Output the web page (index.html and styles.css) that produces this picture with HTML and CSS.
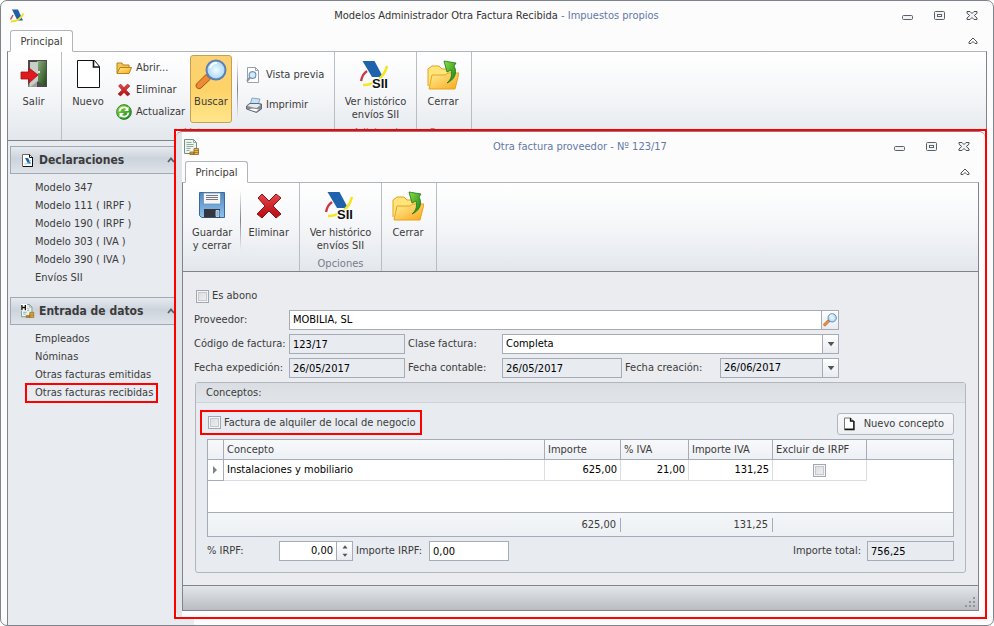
FILE: index.html
```html
<!DOCTYPE html>
<html lang="es">
<head>
<meta charset="utf-8">
<title>Modelos Administrador Otra Factura Recibida</title>
<link rel="stylesheet" href="styles.css">
</head>
<body>
<svg class="defs" aria-hidden="true">
  <defs>
    <linearGradient id="gGreen" x1="0" y1="0" x2="1" y2="1"><stop offset="0" stop-color="#8fe03c"/><stop offset="1" stop-color="#12801c"/></linearGradient>
    <linearGradient id="gRed" x1="0" y1="0" x2="0" y2="1"><stop offset="0" stop-color="#e2484a"/><stop offset="1" stop-color="#b30c10"/></linearGradient>
    <linearGradient id="gFolder" x1="0" y1="0" x2="1" y2="1"><stop offset="0" stop-color="#ffef9a"/><stop offset="1" stop-color="#f9a81a"/></linearGradient>
    <linearGradient id="gDoor" x1="0" y1="0" x2="1" y2="1"><stop offset="0" stop-color="#8fae84"/><stop offset="1" stop-color="#1e4a12"/></linearGradient>
    <linearGradient id="gBlue" x1="0" y1="0" x2="0" y2="1"><stop offset="0" stop-color="#4f86bd"/><stop offset="1" stop-color="#8ec3ee"/></linearGradient>
    <radialGradient id="gLens"><stop offset="0" stop-color="#f4fcff"/><stop offset="1" stop-color="#a4d8f6"/></radialGradient>
    <symbol id="i-aeat" viewBox="0 0 16 16"><path d="M3 1.500h6l5 11H8.500z" fill="#1d5fa8"/><path d="M4 7L1.500 11.500" stroke="#c8505a" stroke-width="1.500" fill="none"/><path d="M2 13.500c5 0 10-3 12.500-8" stroke="#f4e020" stroke-width="1.800" fill="none"/></symbol>
    <symbol id="i-sii" viewBox="0 0 32 32"><path d="M3.500 2h12l8.500 16h-11z" fill="#1f63ad"/><path d="M8 12c-3 2-5 5-6 10" stroke="#c93a46" stroke-width="2.400" fill="none"/><path d="M4 26c11 0 21-7 24-19" stroke="#f6e61c" stroke-width="2.600" fill="none"/><text x="13" y="29" class="sii">SII</text></symbol>
    <symbol id="i-exit" viewBox="0 0 32 32"><rect x="10" y="1" width="19" height="27" fill="#4b4b4b"/><path d="M12 3h8v18h-8z" fill="#e8ece8"/><path d="M19 2l9 0v25l-9-5z" fill="url(#gDoor)"/><path d="M12 21h7v7h-9z" fill="#9a9f9a"/><path d="M12 3h8v19l-8 6z" fill="#c8cfc8"/><circle cx="21" cy="13" r="1" fill="#fff"/><path d="M3 13h8V9l9 7-9 8v-4H3z" fill="#e0191e" stroke="#a41015" stroke-width=".8"/></symbol>
    <symbol id="i-new" viewBox="0 0 32 32"><path d="M5.500 1.500h17l5 6v21h-22z" fill="#fff" stroke="#111"/><path d="M21.500 1v7h6" fill="none" stroke="#111" stroke-width="1.600"/></symbol>
    <symbol id="i-folder" viewBox="0 0 16 16"><path d="M1 13V3h5l1 2h6v3" fill="#f3c64e" stroke="#b5831a"/><path d="M1 13.500L4 7.500h11.500l-2.500 6z" fill="url(#gFolder)" stroke="#b98212"/></symbol>
    <symbol id="i-x" viewBox="0 0 32 32"><path d="M5 8l4-4 7 7 7-7 5 4-8 8 8 8-5 4-7-7-7 7-5-4 8-8z" fill="url(#gRed)" stroke="#951014"/></symbol>
    <symbol id="i-refresh" viewBox="0 0 16 16"><circle cx="8" cy="8" r="7.400" fill="url(#gGreen)" stroke="#1b7a20" stroke-width=".8"/><path d="M3.500 7.500a4.500 4.500 0 0 1 7.500-3M12.500 8.500a4.500 4.500 0 0 1-7.500 3" fill="none" stroke="#fff" stroke-width="1.800"/><path d="M12.500 2.500v4.500H8zM3.500 13.500V9H8z" fill="#fff"/></symbol>
    <symbol id="i-search" viewBox="0 0 32 32"><path d="M1.500 25L11 15.500l4.500 4.500-9.500 9c-3 2-6-1-4.500-4z" fill="#ee8a34" stroke="#9a5524"/><path d="M11 16l3-2.500 4 4-2.500 2.500z" fill="#6a6f8c"/><circle cx="21" cy="11" r="9.500" fill="url(#gLens)" stroke="#5f7fb4" stroke-width="2"/><path d="M15 9a7 7 0 0 1 7-5" stroke="#fff" stroke-width="2" fill="none"/></symbol>
    <symbol id="i-preview" viewBox="0 0 16 16"><path d="M1.500.5h8l3 3v12h-11z" fill="#fff" stroke="#9aa0a8"/><path d="M9.500.5v3h3" fill="none" stroke="#9aa0a8"/><path d="M1 14l3-3.500" stroke="#8f9299" stroke-width="2"/><circle cx="6.500" cy="8" r="3.400" fill="#d3ecfb" stroke="#7591b4" stroke-width="1.200"/></symbol>
    <symbol id="i-print" viewBox="0 0 16 16"><path d="M6 1l8 1-2 6H4z" fill="#c2e2fa" stroke="#7b94ad" stroke-width=".8"/><path d="M.5 9l3-2.500h9l3 .5v5l-5 3.500-10-3.500z" fill="#868c96" stroke="#50565f" stroke-width=".8"/><path d="M1.500 9l9 2 4-3-2-1H4z" fill="#e7ebef"/><path d="M3 12.500l7 2 3-2-7-1z" fill="#fff"/></symbol>
    <symbol id="i-close" viewBox="0 0 32 32"><path d="M1 27V10l4-3h7l3 3h12v8" fill="#ffe57a" stroke="#e2a322"/><path d="M2 30L5 16h13l3-2h11l-4 16z" fill="url(#gFolder)" stroke="#eca11b"/><path d="M20 24c5-4 5-9 4-13l-4 2-3-11 12 2-2 3c4 7 0 14-7 17z" fill="url(#gGreen)" stroke="#17751c" stroke-width=".8"/></symbol>
    <symbol id="i-save" viewBox="0 0 32 32"><path d="M3.500 2.500h25v25h-23l-2-2z" fill="url(#gBlue)" stroke="#39689c"/><path d="M7.500 3h17v11h-17z" fill="#f3f5f8" stroke="#6a93bd" stroke-width=".8"/><path d="M10 5.500h12M10 7.500h12M10 9.500h12" stroke="#777"/><path d="M8 19h16v8.500H8z" fill="#34383e"/><path d="M20 20.500h3v6h-3z" fill="#7fb3e0" stroke="#cfe4f6" stroke-width=".8"/></symbol>
    <symbol id="i-invoice" viewBox="0 0 16 16"><path d="M.5.5h9l3 3v11H.5z" fill="#edf5f0" stroke="#788f86"/><path d="M9.500.5v3h3M2.500 3.500h5M2.500 5.500h7M2.500 7.500h7M2.500 9.500h4M2.500 11.500h3" stroke="#92aaa0" fill="none"/><path d="M6 13h4v2.500H6zM10 9.500h4.500v6H10z" fill="#e9b650" stroke="#97651c" stroke-width=".8"/><path d="M10 11.500h4.500M10 13.500h4.500M6 14.300h4" stroke="#97651c" stroke-width=".7"/></symbol>
    <symbol id="i-data" viewBox="0 0 16 16"><use href="#i-invoice"/><path d="M0 0h7v8H0z" fill="#fff"/><path d="M1 1v6M5 1v6M1 4h4" stroke="#111" stroke-width="1.500" fill="none"/></symbol>
    <symbol id="i-decl" viewBox="0 0 14 16"><path d="M1.500 2.500h7l3 3v9h-10z" fill="#fff" stroke="#666"/><path d="M11.500 5v9.500H2M8.500 2.500v3h3" stroke="#111" fill="none"/><path d="M4 6h3l3 5.500H7z" fill="#1d5fa8"/><path d="M3.500 12c3 0 5-1 6-4" stroke="#8ac4d8" fill="none"/></symbol>
    <symbol id="i-doc" viewBox="0 0 12 14"><path d="M1 1h6l3 3v8H1z" fill="#fff" stroke="#777"/><path d="M10.500 4v8.500H1M7 1v3h3" stroke="#111" stroke-width="1.300" fill="none"/></symbol>
    <symbol id="i-min" viewBox="0 0 12 10"><rect x=".5" y="4.500" width="10" height="4" rx="1" fill="#f2f3f4" stroke="#5b6067"/></symbol>
    <symbol id="i-max" viewBox="0 0 12 10"><rect x=".5" y=".5" width="10" height="8" rx="1" fill="#f2f3f4" stroke="#5b6067"/><rect x="3.500" y="3.500" width="4" height="2" fill="#fff" stroke="#5b6067"/></symbol>
    <symbol id="i-quit" viewBox="0 0 12 10"><path d="M1 .5h3l2 2 2-2h3v1.700L8.300 4.500 11 7v1.500H8l-2-2-2 2H1V7l2.700-2.500L1 2.200z" fill="#f2f3f4" stroke="#4c5158"/></symbol>
    <symbol id="i-fold" viewBox="0 0 10 8"><path d="M1 5l4-4 4 4v1.500H7L5 4.500l-2 2H1z" fill="#fff" stroke="#4c5158"/></symbol>
    <symbol id="i-chev" viewBox="0 0 8 6"><path d="M1 5l3-3.500L7 5" fill="none" stroke="#5b6067" stroke-width="1.800"/></symbol>
    <symbol id="i-grip" viewBox="0 0 12 12"><path d="M8 0h2v2H8zM8 4h2v2H8zM4 4h2v2H4zM8 8h2v2H8zM4 8h2v2H4zM0 8h2v2H0z" fill="#91969c"/></symbol>
    <symbol id="i-row" viewBox="0 0 6 8"><path d="M1 0l4 4-4 4z" fill="#7d838e"/></symbol>
    <symbol id="i-up" viewBox="0 0 6 4"><path d="M1 3.500L3 1l2 2.500z" fill="#4f545b"/></symbol>
    <symbol id="i-down" viewBox="0 0 6 4"><path d="M1 .5h4L3 3z" fill="#4f545b"/></symbol>
  </defs>
</svg>

<div class="window">
  <header class="titlebar">
    <svg class="ic16"><use href="#i-aeat"/></svg>
    <h1 class="title"><span class="title-main">Modelos Administrador Otra Factura Recibida</span> - Impuestos propios</h1>
    <div class="controls">
      <button type="button" aria-label="Minimizar"><svg><use href="#i-min"/></svg></button>
      <button type="button" aria-label="Maximizar"><svg><use href="#i-max"/></svg></button>
      <button type="button" aria-label="Cerrar ventana"><svg><use href="#i-quit"/></svg></button>
    </div>
  </header>
  <div class="tabs">
    <button type="button" class="tab">Principal</button>
    <button type="button" class="fold" aria-label="Contraer"><svg><use href="#i-fold"/></svg></button>
  </div>
  <div class="ribbon">
    <section class="group narrow">
      <div class="tools"><button type="button" class="big"><svg><use href="#i-exit"/></svg>Salir</button></div>
    </section>
    <section class="group wide">
      <div class="tools">
        <button type="button" class="big new"><svg><use href="#i-new"/></svg>Nuevo</button>
        <div class="stack">
          <button type="button" class="small"><svg><use href="#i-folder"/></svg>Abrir...</button>
          <button type="button" class="small"><svg><use href="#i-x"/></svg>Eliminar</button>
          <button type="button" class="small"><svg><use href="#i-refresh"/></svg>Actualizar</button>
        </div>
        <button type="button" class="big active"><svg><use href="#i-search"/></svg>Buscar</button>
        <i class="divider"></i>
        <div class="stack loose">
          <button type="button" class="small"><svg><use href="#i-preview"/></svg>Vista previa</button>
          <button type="button" class="small"><svg><use href="#i-print"/></svg>Imprimir</button>
        </div>
      </div>
      <div class="caption">Listas</div>
    </section>
    <section class="group medium">
      <div class="tools"><button type="button" class="big"><svg><use href="#i-sii"/></svg>Ver histórico<br>envíos SII</button></div>
      <div class="caption">Adicional</div>
    </section>
    <section class="group narrow">
      <div class="tools"><button type="button" class="big"><svg><use href="#i-close"/></svg>Cerrar</button></div>
      <div class="caption">Cerrar</div>
    </section>
  </div>
  <nav class="sidebar">
    <h2 class="side-head"><svg class="ic14"><use href="#i-decl"/></svg>Declaraciones<svg class="chev"><use href="#i-chev"/></svg></h2>
    <ul>
      <li><a href="#">Modelo 347</a></li>
      <li><a href="#">Modelo 111 ( IRPF )</a></li>
      <li><a href="#">Modelo 190 ( IRPF )</a></li>
      <li><a href="#">Modelo 303 ( IVA )</a></li>
      <li><a href="#">Modelo 390 ( IVA )</a></li>
      <li><a href="#">Envíos SII</a></li>
    </ul>
    <h2 class="side-head"><svg class="ic14"><use href="#i-data"/></svg>Entrada de datos<svg class="chev"><use href="#i-chev"/></svg></h2>
    <ul>
      <li><a href="#">Empleados</a></li>
      <li><a href="#">Nóminas</a></li>
      <li><a href="#">Otras facturas emitidas</a></li>
      <li><a href="#" class="marked">Otras facturas recibidas</a></li>
    </ul>
  </nav>
</div>

<div class="dialog" role="dialog" aria-label="Otra factura proveedor">
  <div class="dialog-inner">
    <header class="titlebar">
      <svg class="ic16"><use href="#i-invoice"/></svg>
      <h1 class="title">Otra factura proveedor - Nº 123/17</h1>
      <div class="controls">
        <button type="button" aria-label="Minimizar"><svg><use href="#i-min"/></svg></button>
        <button type="button" aria-label="Maximizar"><svg><use href="#i-max"/></svg></button>
        <button type="button" aria-label="Cerrar ventana"><svg><use href="#i-quit"/></svg></button>
      </div>
    </header>
    <div class="tabs">
      <button type="button" class="tab">Principal</button>
      <button type="button" class="fold" aria-label="Contraer"><svg><use href="#i-fold"/></svg></button>
    </div>
    <div class="ribbon">
      <section class="group pair">
        <div class="tools">
          <button type="button" class="big"><svg><use href="#i-save"/></svg>Guardar<br>y cerrar</button>
          <i class="divider"></i>
          <button type="button" class="big"><svg><use href="#i-x"/></svg>Eliminar</button>
        </div>
      </section>
      <section class="group medium">
        <div class="tools"><button type="button" class="big"><svg><use href="#i-sii"/></svg>Ver histórico<br>envíos SII</button></div>
        <div class="caption">Opciones</div>
      </section>
      <section class="group narrow">
        <div class="tools"><button type="button" class="big"><svg><use href="#i-close"/></svg>Cerrar</button></div>
      </section>
    </div>

    <form class="form">
      <div class="fields">
        <label class="check full"><input type="checkbox">Es abono</label>
        <label for="prov">Proveedor:</label>
        <div class="combo rest">
          <input id="prov" type="text" value="MOBILIA, SL">
          <button type="button" class="lookup" aria-label="Buscar proveedor"><svg><use href="#i-search"/></svg></button>
        </div>
        <label for="cod">Código de factura:</label>
        <input id="cod" class="box" type="text" value="123/17" readonly>
        <label for="clase" class="next">Clase factura:</label>
        <div class="drop long"><select id="clase"><option>Completa</option></select><span class="arrow"><svg><use href="#i-down"/></svg></span></div>
        <label for="fexp">Fecha expedición:</label>
        <input id="fexp" class="box" type="text" value="26/05/2017" readonly>
        <label for="fcon" class="next">Fecha contable:</label>
        <input id="fcon" class="box" type="text" value="26/05/2017" readonly>
        <label for="fcre" class="next">Fecha creación:</label>
        <div class="drop muted"><select id="fcre"><option>26/06/2017</option></select><span class="arrow"><svg><use href="#i-down"/></svg></span></div>
      </div>

      <section class="panel">
        <h2 class="panel-head">Conceptos:</h2>
        <div class="panel-tools">
          <label class="check framed"><input type="checkbox">Factura de alquiler de local de negocio</label>
          <button type="button" class="add"><svg><use href="#i-doc"/></svg>Nuevo concepto</button>
        </div>
        <div class="grid-wrap">
          <table>
            <colgroup><col class="c-mark"><col><col class="c-imp"><col class="c-iva"><col class="c-impiva"><col class="c-exc"><col class="c-end"></colgroup>
            <thead><tr><th></th><th>Concepto</th><th>Importe</th><th>% IVA</th><th>Importe IVA</th><th>Excluir de IRPF</th><th></th></tr></thead>
            <tbody>
              <tr><td class="mark"><svg><use href="#i-row"/></svg></td><td>Instalaciones y mobiliario</td><td class="num">625,00</td><td class="num">21,00</td><td class="num">131,25</td><td class="mid"><input type="checkbox" aria-label="Excluir de IRPF"></td><td class="void"></td></tr>
              <tr class="filler"><td colspan="7"></td></tr>
            </tbody>
            <tfoot><tr><td></td><td></td><td class="num"><span>625,00</span></td><td></td><td class="num"><span>131,25</span></td><td></td><td></td></tr></tfoot>
          </table>
        </div>
        <div class="totals">
          <label for="pirpf" class="t-first">% IRPF:</label>
          <div class="spin">
            <input id="pirpf" type="text" value="0,00">
            <div class="steps"><button type="button" aria-label="Subir"><svg><use href="#i-up"/></svg></button><button type="button" aria-label="Bajar"><svg><use href="#i-down"/></svg></button></div>
          </div>
          <label for="iirpf" class="t-second">Importe IRPF:</label>
          <input id="iirpf" class="box t-amount" type="text" value="0,00">
          <label for="tot" class="t-total">Importe total:</label>
          <input id="tot" class="box t-sum" type="text" value="756,25" readonly>
        </div>
      </section>
    </form>
    <footer class="status"><svg><use href="#i-grip"/></svg></footer>
  </div>
</div>
</body>
</html>
```
FILE: styles.css
```css
* { box-sizing: border-box; }
html, body { height: 100%; }
body {
  margin: 0;
  background: #fff;
  color: #3b3b3b;
  font: 11px/14px "DejaVu Sans Condensed", "DejaVu Sans", sans-serif;
  position: relative;
  overflow: hidden;
}
button, input, select { font: inherit; color: inherit; margin: 0; padding: 0; border: 0; background: none; border-radius: 0; }
h1, h2 { margin: 0; font-size: inherit; font-weight: normal; }
ul { margin: 0; padding: 0; list-style: none; }
a { color: inherit; text-decoration: none; }
svg { display: block; flex: none; }
.defs { position: absolute; width: 0; height: 0; }
.sii { font: bold 13px "Liberation Sans", sans-serif; fill: #111; stroke: #fff; stroke-width: 2px; paint-order: stroke; }
.ic16 { width: 16px; height: 16px; }
.ic14 { width: 14px; height: 16px; }

/* Window frame */
.window {
  display: flex;
  flex-direction: column;
  height: 100vh;
  border: 1px solid #7f838c;
  border-radius: 7px;
  background: #fcfcfc;
  overflow: hidden;
}
.titlebar { display: flex; align-items: center; height: 29px; padding: 0 15px 0 8px; }
.title { flex: 1; text-align: center; color: #6379a8; padding-left: 66px; }
.title-main { color: #333; }
.controls { display: flex; gap: 20px; }
.controls svg { width: 12px; height: 10px; }
.tabs { display: flex; justify-content: space-between; align-items: center; height: 21px; padding: 0 15px 0 9px; }
.tab {
  width: 63px;
  height: 22px;
  padding-top: 2px;
  align-self: flex-start;
  border: 1px solid #b1b5bb;
  border-bottom-color: #fff;
  border-radius: 3px 3px 0 0;
  background: #fff;
  position: relative;
}
.fold svg { width: 10px; height: 8px; }

/* Ribbon */
.ribbon {
  display: flex;
  height: 90px;
  margin: 0 6px;
  flex: none;
  border: 1px solid #7f838c;
  border-top-color: #b1b5bb;
  background: linear-gradient(#fff, #f6f7f9 45%, #e3e7ec);
}
.group { display: flex; flex-direction: column; justify-content: space-between; border-right: 1px solid #b9bdc4; flex: none; }
.narrow { width: 54px; }
.medium { width: 82px; }
.pair { width: 117px; }
.wide { width: 273px; }
.medium + .narrow { width: 55px; }
.tools { display: flex; justify-content: center; padding-top: 3px; }
.narrow .tools { padding-right: 2px; }
.wide .tools { justify-content: flex-start; padding-left: 4px; }
.pair .tools { justify-content: space-between; padding: 3px 6px 0 5px; }
.pair .divider { margin: 4px 0 0; }
.caption { text-align: center; color: #767c8b; }
.big {
  display: flex;
  flex-direction: column;
  align-items: center;
  height: 68px;
  padding: 3px 3px 0;
  border: 1px solid transparent;
  border-radius: 3px;
  line-height: 13px;
  white-space: nowrap;
}
.big svg { width: 32px; height: 32px; margin-bottom: 4px; }
.new { width: 44px; }
.active { width: 42px; margin-left: 6px; border-color: #c6a04c; background: linear-gradient(#fbd274, #fdd267 50%, #ffe68c); }
.stack { display: flex; flex-direction: column; gap: 6px; padding: 5px 0 0 6px; width: 74px; }
.loose { gap: 14px; padding: 12px 0 0 8px; width: 92px; }
.small { display: flex; align-items: center; gap: 4px; height: 16px; white-space: nowrap; }
.small svg { width: 16px; height: 16px; }
.divider { width: 1px; height: 60px; margin: 4px 0 0 5px; background: linear-gradient(rgba(120,125,135,0), #7d828b 50%, rgba(120,125,135,0)); }

/* Sidebar */
.sidebar {
  flex: 1;
  width: 187px;
  margin-left: 6px;
  padding: 5px 4px 0 2px;
  border-left: 1px solid #7f838c;
  background: #e8ebf0;
}
.side-head {
  display: flex;
  align-items: center;
  gap: 4px;
  height: 28px;
  padding: 0 14px 0 10px;
  border: 1px solid #a3a9b3;
  background: linear-gradient(#e6eaee, #ccd3dc 45%, #dfe3e9);
  font-size: 12px;
  font-weight: bold;
}
.chev { width: 8px; height: 6px; margin-left: auto; }
.sidebar ul { padding: 5px 0 10px 25px; }
.sidebar li { display: flex; height: 18px; align-items: center; }
.marked { padding: 1px 3px 1px 8px; margin-left: -10px; border: 2px solid #f00; white-space: nowrap; }

/* Dialog laid over the main window */
.dialog {
  position: absolute;
  left: 174px;
  top: 129px;
  right: 7px;
  bottom: 7px;
  border: 2px solid #f00;
  background: #fcfcfc;
}
.dialog-inner {
  display: flex;
  flex-direction: column;
  height: 100%;
  border-top: 1px solid #7f838c;
  border-radius: 6px;
  background: linear-gradient(90deg, #e1e5e9 6px, #fcfcfc 6px);
  padding-bottom: 6px;
}
.form {
  flex: 1;
  margin: 0 6px;
  padding: 14px 12px 0 11px;
  border: solid #7f838c;
  border-width: 0 1px;
  background: #eaecf0;
}
.status {
  display: flex;
  justify-content: flex-end;
  align-items: flex-end;
  height: 26px;
  margin: 0 6px;
  padding: 0 1px 1px 0;
  border: 1px solid #7f838c;
  background: linear-gradient(#e3e6ea, #b9bdc2);
}
.status svg { width: 12px; height: 12px; }

/* Fields */
.fields {
  display: grid;
  grid-template-columns: 95px 116fr 97px 120fr 98px 119fr;
  grid-auto-rows: 20px;
  row-gap: 4px;
  align-items: center;
  max-width: 645px;
}
.full { grid-column: 1 / -1; }
.rest { grid-column: 2 / -1; }
.long { grid-column: 4 / -1; }
.next { padding-left: 3px; }
.fields label, .totals label { white-space: nowrap; }
.check { display: flex; align-items: center; gap: 3px; }
.full.check { padding-left: 2px; }
input[type="checkbox"] {
  appearance: none;
  width: 13px;
  height: 13px;
  flex: none;
  border: 1px solid #a1a7b3;
  background: linear-gradient(135deg, #d9dadb, #f2f2f2);
  box-shadow: inset 0 0 0 1px #f4f5f7, inset 0 0 0 2px #c5c8cd;
}
.box, .combo, .drop, .spin { height: 20px; min-width: 0; border: 1px solid #a5abb7; background: #fff; color: #000; }
.box { width: 100%; padding: 0 3px; }
.box[readonly], .muted { background: #e8ebf0; }
.combo, .spin { display: flex; }
.combo input { flex: 1; min-width: 0; padding: 0 3px; }
.lookup { display: flex; align-items: center; justify-content: center; width: 17px; border-left: 1px solid #a5abb7; background: linear-gradient(#fff, #e8ebf0); }
.lookup svg { width: 14px; height: 14px; }
.drop { display: grid; grid-template-columns: 1fr 16px; }
.drop select { grid-area: 1 / 1 / 2 / 3; appearance: none; padding: 0 3px; min-width: 0; }
.arrow { grid-area: 1 / 2; display: flex; align-items: center; justify-content: center; border-left: 1px solid #a5abb7; background: linear-gradient(#fff, #e8ebf0); pointer-events: none; }
.arrow svg { width: 10px; height: 7px; }

/* Conceptos panel */
.panel { margin: 4px 0 0 1px; border: 1px solid #b2b6bd; border-radius: 3px; background: #e8ebf0; }
.panel-head { height: 20px; padding-left: 10px; line-height: 19px; border-bottom: 1px solid #cfd3d8; background: linear-gradient(#dadee3, #e1e4e8); }
.panel-tools { display: flex; justify-content: space-between; align-items: flex-end; padding: 7px 11px 4px 4px; }
.framed { height: 25px; padding: 0 5px 0 6px; border: 2px solid #f00; white-space: nowrap; }
.add {
  display: flex;
  align-items: center;
  gap: 8px;
  height: 22px;
  padding: 0 9px 0 5px;
  border: 1px solid #b2b7bf;
  border-radius: 3px;
  background: linear-gradient(#f8f9fb, #eceff2);
  white-space: nowrap;
}
.add svg { width: 13px; height: 14px; }
.grid-wrap { margin: 0 11px; border: 1px solid #a5abb7; background: #fff; }
table { width: 100%; table-layout: fixed; border-collapse: separate; border-spacing: 0; }
.c-mark { width: 16px; }
.c-imp { width: 76px; }
.c-iva { width: 68px; }
.c-impiva { width: 84px; }
.c-exc { width: 94px; }
.c-end { width: 86px; }
th, td { padding: 0 3px; text-align: left; font-weight: normal; white-space: nowrap; }
th { height: 20px; border: solid #a5abb7; border-width: 0 1px 1px 0; background: linear-gradient(#f8f9fb, #edf0f4); }
th:last-child { border-right: 0; }
tbody td { height: 21px; color: #000; border: solid #d9dce2; border-width: 0 1px 1px 0; }
tbody .mark { border-color: #a5abb7; padding: 0 4px; }
.mark svg { width: 6px; height: 8px; }
tbody .void, .filler td { border: 0; }
.filler td { height: 31px; }
.num { text-align: right; }
.mid { text-align: center; }
.mid input { vertical-align: middle; }
tfoot td { height: 24px; border-top: 1px solid #a5abb7; padding: 0; background: linear-gradient(#f4f6f8, #edf0f4); }
tfoot span { display: inline-block; padding-right: 4px; border-right: 1px solid #a5abb7; }

.totals { display: flex; align-items: center; padding: 4px 11px 11px; }
.t-first { width: 72px; }
.t-second { width: 76px; padding-left: 3px; }
.spin { width: 74px; }
.spin input { flex: 1; min-width: 0; padding-right: 3px; text-align: right; }
.steps { display: flex; flex-direction: column; width: 16px; border-left: 1px solid #a5abb7; background: linear-gradient(#fff, #e8ebf0); }
.steps button { flex: 1; display: flex; align-items: center; justify-content: center; }
.steps svg { width: 8px; height: 5px; }
.t-amount { width: 80px; }
.t-total { margin-left: auto; padding-right: 6px; }
.t-sum { width: 87px; }
```
